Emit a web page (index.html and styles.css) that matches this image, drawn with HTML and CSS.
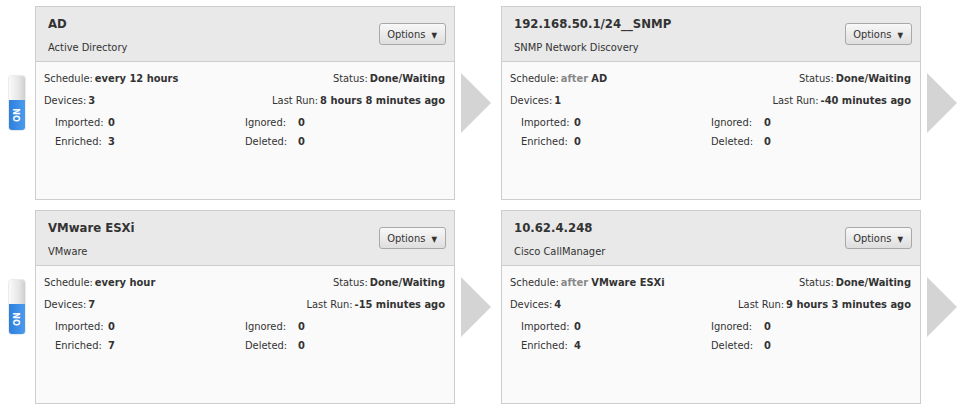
FILE: index.html
```html
<!DOCTYPE html>
<html lang="en">
<head>
    <meta charset="UTF-8">
    <title>Discovery Jobs</title>
    <link rel="stylesheet" href="styles.css">
</head>
<body>
    <div class="board">
        <!-- Row 1 -->
        <div class="toggle"><span class="toggle-knob"></span><span class="toggle-on">ON</span></div>
        <div class="card">
            <div class="card-head">
                <div class="titles">
                    <h3>AD</h3>
                    <p>Active Directory</p>
                </div>
                <button class="btn">Options <span class="caret">&#9660;</span></button>
            </div>
            <div class="card-body">
                <div class="line"><span>Schedule:<b>every 12 hours</b></span><span>Status:<b>Done/Waiting</b></span></div>
                <div class="line"><span>Devices:<b>3</b></span><span>Last Run:<b>8 hours 8 minutes ago</b></span></div>
                <div class="counts">
                    <span>Imported:</span><b>0</b><span>Ignored:</span><b>0</b>
                    <span>Enriched:</span><b>3</b><span>Deleted:</span><b>0</b>
                </div>
            </div>
        </div>
        <div class="arrow"></div>
        <div class="card">
            <div class="card-head">
                <div class="titles">
                    <h3>192.168.50.1/24__SNMP</h3>
                    <p>SNMP Network Discovery</p>
                </div>
                <button class="btn">Options <span class="caret">&#9660;</span></button>
            </div>
            <div class="card-body">
                <div class="line"><span>Schedule:<b class="muted">after</b> <b class="tight">AD</b></span><span>Status:<b>Done/Waiting</b></span></div>
                <div class="line"><span>Devices:<b>1</b></span><span>Last Run:<b>-40 minutes ago</b></span></div>
                <div class="counts">
                    <span>Imported:</span><b>0</b><span>Ignored:</span><b>0</b>
                    <span>Enriched:</span><b>0</b><span>Deleted:</span><b>0</b>
                </div>
            </div>
        </div>
        <div class="arrow"></div>

        <!-- Row 2 -->
        <div class="toggle"><span class="toggle-knob"></span><span class="toggle-on">ON</span></div>
        <div class="card">
            <div class="card-head">
                <div class="titles">
                    <h3>VMware ESXi</h3>
                    <p>VMware</p>
                </div>
                <button class="btn">Options <span class="caret">&#9660;</span></button>
            </div>
            <div class="card-body">
                <div class="line"><span>Schedule:<b>every hour</b></span><span>Status:<b>Done/Waiting</b></span></div>
                <div class="line"><span>Devices:<b>7</b></span><span>Last Run:<b>-15 minutes ago</b></span></div>
                <div class="counts">
                    <span>Imported:</span><b>0</b><span>Ignored:</span><b>0</b>
                    <span>Enriched:</span><b>7</b><span>Deleted:</span><b>0</b>
                </div>
            </div>
        </div>
        <div class="arrow"></div>
        <div class="card">
            <div class="card-head">
                <div class="titles">
                    <h3>10.62.4.248</h3>
                    <p>Cisco CallManager</p>
                </div>
                <button class="btn">Options <span class="caret">&#9660;</span></button>
            </div>
            <div class="card-body">
                <div class="line"><span>Schedule:<b class="muted">after</b> <b class="tight">VMware ESXi</b></span><span>Status:<b>Done/Waiting</b></span></div>
                <div class="line"><span>Devices:<b>4</b></span><span>Last Run:<b>9 hours 3 minutes ago</b></span></div>
                <div class="counts">
                    <span>Imported:</span><b>0</b><span>Ignored:</span><b>0</b>
                    <span>Enriched:</span><b>4</b><span>Deleted:</span><b>0</b>
                </div>
            </div>
        </div>
        <div class="arrow"></div>
    </div>
</body>
</html>
```

FILE: styles.css
```css
body {
    margin: 0;
    background: #fff;
    font-family: "DejaVu Sans Condensed", "DejaVu Sans", sans-serif;
    font-size: 11px;
    color: #333;
}
.board {
    display: grid;
    grid-template-columns: 35px 420px 46px 420px 42px;
    grid-auto-rows: 194px;
    row-gap: 10px;
    align-items: center;
    padding-top: 6px;
}
.toggle {
    justify-self: start;
    margin-left: 9px;
    width: 16px;
    height: 54px;
    border-radius: 3px;
    overflow: hidden;
    display: flex;
    flex-direction: column;
    box-shadow: 0 0 0 1px rgba(0, 0, 0, 0.08);
}
.toggle-knob {
    height: 24px;
    background: linear-gradient(to right, #fafafa, #e6e6e6 60%, #cfcfcf);
}
.toggle-on {
    flex: 1;
    display: flex;
    align-items: center;
    justify-content: center;
    background: linear-gradient(to right, #4a9bef, #2f7fdc);
    color: #fff;
    font-size: 9px;
    font-weight: bold;
    writing-mode: vertical-rl;
    transform: rotate(180deg);
}
.card {
    height: 194px;
    box-sizing: border-box;
    border: 1px solid #cdcdcd;
    background: #fafafa;
    display: flex;
    flex-direction: column;
    align-self: stretch;
}
.card-head {
    height: 54px;
    background: #e9e9e9;
    border-bottom: 1px solid #cdcdcd;
    display: flex;
    align-items: center;
    justify-content: space-between;
    padding: 0 8px 0 12px;
}
.titles h3 {
    margin: 1px 0 10px;
    font-size: 13px;
    font-weight: bold;
    color: #333;
}
.titles p {
    margin: 0;
    font-size: 11px;
}
.btn {
    height: 22px;
    padding: 0 8px 0 7px;
    border: 1px solid #a9a9a9;
    border-radius: 3px;
    background: linear-gradient(#f8f8f8, #dedede);
    font-family: inherit;
    font-size: 11px;
    color: #333;
    cursor: pointer;
}
.caret {
    font-size: 8px;
    margin-left: 3px;
}
.card-body {
    padding: 10px 9px 0 8px;
}
.line {
    display: flex;
    justify-content: space-between;
    height: 22px;
    line-height: 14px;
}
.line b {
    margin-left: 2px;
}
b.muted {
    color: #888;
}
b.tight {
    margin-left: 0;
}
.counts {
    display: grid;
    grid-template-columns: 53px 137px 53px auto;
    row-gap: 5px;
    padding-left: 11px;
    line-height: 14px;
}
.arrow {
    justify-self: start;
    margin-left: 6px;
    width: 0;
    height: 0;
    border-top: 30px solid transparent;
    border-bottom: 30px solid transparent;
    border-left: 30px solid #d4d4d4;
}
```
